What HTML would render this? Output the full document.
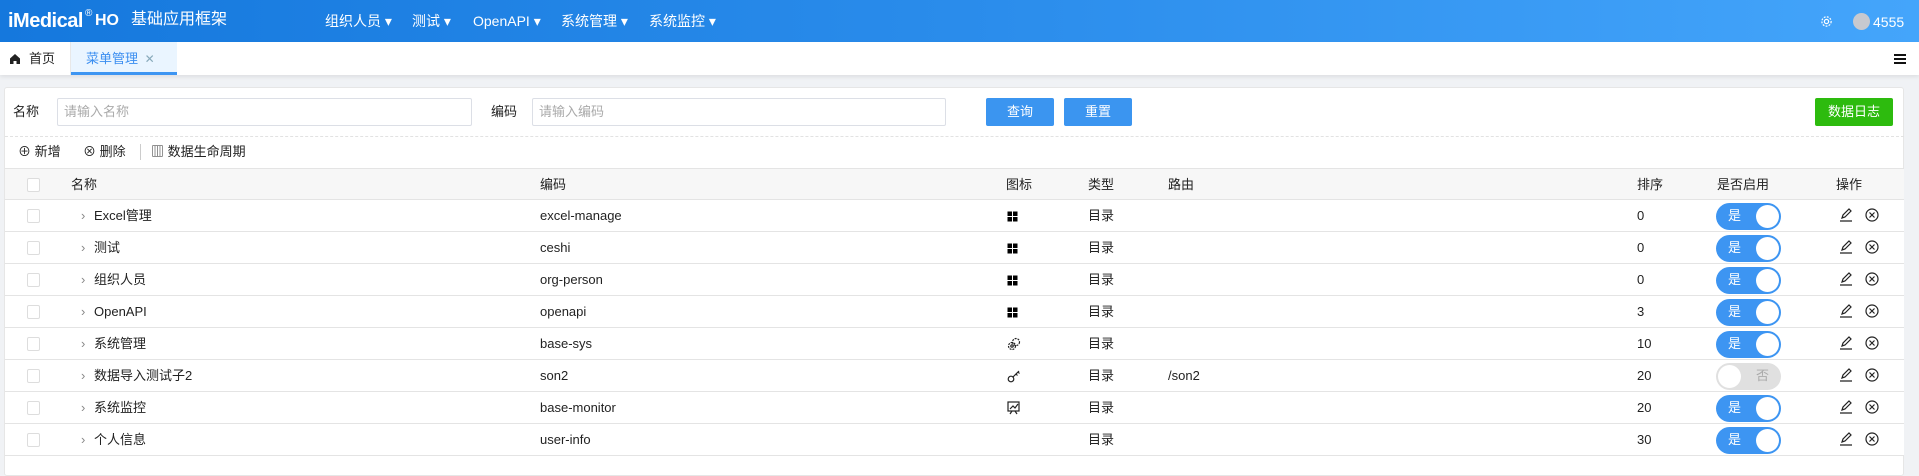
<!DOCTYPE html>
<html><head><meta charset="utf-8"><style>
*{box-sizing:border-box;margin:0;padding:0}
body{width:1919px;height:476px;overflow:hidden;background:#f0f2f5;font-family:"Liberation Sans","Noto Sans CJK SC",sans-serif;font-size:13px;line-height:16px;color:#222;position:relative}
.abs{position:absolute}
.hdr{left:0;top:0;width:1919px;height:42px;background:linear-gradient(90deg,#1578dd 0%,#2a8ceb 50%,#44a5fb 100%);color:#fff}
.nav{top:13px;font-size:14px;line-height:16px;color:#fff;white-space:nowrap}
.tabs{left:0;top:42px;width:1919px;height:33px;background:#fff;box-shadow:0 2px 4px rgba(0,0,0,.08)}
.panel{left:4px;top:87px;width:1900px;height:389px;background:#fff;border:1px solid #e6e6e6;border-radius:3px}
.inp{height:28px;border:1px solid #dcdfe6;border-radius:2px;color:#aaa;font-size:13px;padding:5px 6px}
.btn{height:28px;color:#fff;font-size:13px;text-align:center;line-height:28px;border-radius:2px}
.row{left:5px;width:1899px;height:32px;border-bottom:1px solid #e4e4e4;background:#fff}
.row span,.th span{position:absolute;top:8px;white-space:nowrap;line-height:16px}
.cb{position:absolute;left:22px;top:9px;width:13px;height:14px;border:1px solid #ddd;border-radius:2px;background:#fff}
.sw{position:absolute;left:1711px;top:3px;width:65px;height:27px;border-radius:14px;background:#3d95f2}
.sw b{position:absolute;right:2px;top:2px;width:23px;height:23px;border-radius:50%;background:#fff}
.sw i{position:absolute;left:12px;top:5px;font-style:normal;color:#fff;font-size:13px;line-height:16px}
.off{background:#e0e0e0}.off b{left:2px;right:auto}.off i{left:auto;right:12px;color:#aaa}
</style></head><body>
<div class="abs hdr">
<div class="abs" style="left:8px;top:10px;font-size:20px;line-height:22px;font-weight:bold;letter-spacing:-0.5px">iMedical</div>
<div class="abs" style="left:85px;top:9px;font-size:10px;line-height:10px">®</div>
<div class="abs" style="left:95px;top:12px;font-size:16px;line-height:18px;font-weight:bold">HO</div>
<div class="abs" style="left:131px;top:11px;font-size:16px;line-height:18px">基础应用框架</div>
<div class="abs nav" style="left:325px">组织人员 ▾</div>
<div class="abs nav" style="left:412px">测试 ▾</div>
<div class="abs nav" style="left:473px">OpenAPI ▾</div>
<div class="abs nav" style="left:561px">系统管理 ▾</div>
<div class="abs nav" style="left:649px">系统监控 ▾</div>
<svg class="abs" style="left:1820px;top:15px" width="13" height="13" viewBox="0 0 14 14"><circle cx="7" cy="7" r="2.3" fill="none" stroke="#fff" stroke-width="1.3"/><circle cx="7" cy="7" r="5" fill="none" stroke="#fff" stroke-width="1.3" stroke-dasharray="2 1.4"/></svg>
<div class="abs" style="left:1853px;top:13px;width:17px;height:17px;border-radius:50%;background:#c7c9cf"></div>
<div class="abs" style="left:1873px;top:14px;font-size:14px">4555</div>
</div>
<div class="abs tabs">
<svg class="abs" style="left:10px;top:12px" width="10" height="10" viewBox="0 0 10 10"><path d="M0 4.5L5 0 10 4.5V10H6.5V7h-3v3H0z" fill="#222"/></svg>
<div class="abs" style="left:29px;top:9px;font-size:13px">首页</div>
<div class="abs" style="left:70px;top:0;width:1px;height:33px;background:#e8e8e8"></div>
<div class="abs" style="left:71px;top:0;width:106px;height:33px;background:#eaf5ff;border-bottom:3px solid #3d95f2"></div>
<div class="abs" style="left:86px;top:9px;font-size:13px;color:#3b8ef0">菜单管理 <span style="color:#8ab;font-size:12px;margin-left:3px">✕</span></div>
<div class="abs" style="left:1894px;top:12px;width:12px;height:2px;background:#111;box-shadow:0 4px 0 #111,0 8px 0 #111"></div>
</div>
<div class="abs panel"></div>
<div class="abs" style="left:13px;top:104px">名称</div>
<div class="abs inp" style="left:57px;top:98px;width:415px">请输入名称</div>
<div class="abs" style="left:491px;top:104px">编码</div>
<div class="abs inp" style="left:532px;top:98px;width:414px">请输入编码</div>
<div class="abs btn" style="left:986px;top:98px;width:68px;background:#3b95f0">查询</div>
<div class="abs btn" style="left:1064px;top:98px;width:68px;background:#3b95f0">重置</div>
<div class="abs btn" style="left:1815px;top:98px;width:78px;background:#2dbb0e">数据日志</div>
<div class="abs" style="left:5px;top:136px;width:1899px;border-top:1px dashed #e2e2e2"></div>
<div class="abs" style="left:18px;top:144px">⊕ 新增</div>
<div class="abs" style="left:83px;top:144px">⊗ 删除</div>
<div class="abs" style="left:140px;top:144px;width:1px;height:16px;background:#ccc"></div>
<div class="abs" style="left:151px;top:144px">▥ 数据生命周期</div>
<div class="abs th row" style="top:168px;background:#f7f7f7;border-top:1px solid #e4e4e4">
<div class="cb"></div><span style="left:66px">名称</span><span style="left:535px">编码</span><span style="left:1001px">图标</span><span style="left:1083px">类型</span><span style="left:1163px">路由</span><span style="left:1632px">排序</span><span style="left:1712px">是否启用</span><span style="left:1831px">操作</span>
</div>
<div id="rows"></div>
<script>
var d=[["Excel管理","excel-manage","g","","0",1],["测试","ceshi","g","","0",1],["组织人员","org-person","g","","0",1],["OpenAPI","openapi","g","","3",1],["系统管理","base-sys","c","","10",1],["数据导入测试子2","son2","k","/son2","20",0],["系统监控","base-monitor","m","","20",1],["个人信息","user-info","","","30",1]];
var ic={g:'<svg width="11" height="11"><rect x="0.5" y="0.5" width="4.5" height="4.5"/><rect x="6" y="0.5" width="4.5" height="4.5"/><rect x="0.5" y="6" width="4.5" height="4.5"/><rect x="6" y="6" width="4.5" height="4.5"/></svg>',
c:'<svg width="14" height="14" fill="none" stroke="#222" stroke-width="1.2"><circle cx="5" cy="9" r="3.5" stroke-dasharray="2 1"/><circle cx="9" cy="5" r="3.5" stroke-dasharray="2 1"/><circle cx="5" cy="9" r="1.2"/></svg>',
k:'<svg width="14" height="14" fill="none" stroke="#222" stroke-width="1.2"><circle cx="4" cy="10" r="2.8"/><path d="M6 8L12 2M9 5l1.5 1.5M11 3l1.5 1.5"/></svg>',
m:'<svg width="13" height="14" fill="none" stroke="#222" stroke-width="1.2"><rect x="1" y="1" width="11" height="9"/><path d="M3 8l3-3 2 2 3-4M5 10l-2 3M8 10l2 3"/></svg>'};
var h='';d.forEach(function(r,i){h+='<div class="abs row" style="top:'+(200+i*32)+'px"><div class="cb"></div><span style="left:76px;color:#888">›</span><span style="left:89px">'+r[0]+'</span><span style="left:535px">'+r[1]+'</span><span style="left:1002px;top:'+(r[2]=="g"?10:9)+'px">'+(ic[r[2]]||'')+'</span><span style="left:1083px">目录</span><span style="left:1163px">'+r[3]+'</span><span style="left:1632px">'+r[4]+'</span><div class="sw'+(r[5]?'':' off')+'"><i>'+(r[5]?'是':'否')+'</i><b></b></div><span style="left:1834px;top:8px"><svg width="14" height="14" fill="none" stroke="#222" stroke-width="1.2"><path d="M3 10l1-3 6-6 2 2-6 6z M1 13h12"/></svg></span><span style="left:1860px;top:8px"><svg width="14" height="14" fill="none" stroke="#222" stroke-width="1.2"><circle cx="7" cy="7" r="6"/><path d="M4.5 4.5l5 5M9.5 4.5l-5 5"/></svg></span></div>'});
document.getElementById('rows').innerHTML=h;
</script>
</body></html>
